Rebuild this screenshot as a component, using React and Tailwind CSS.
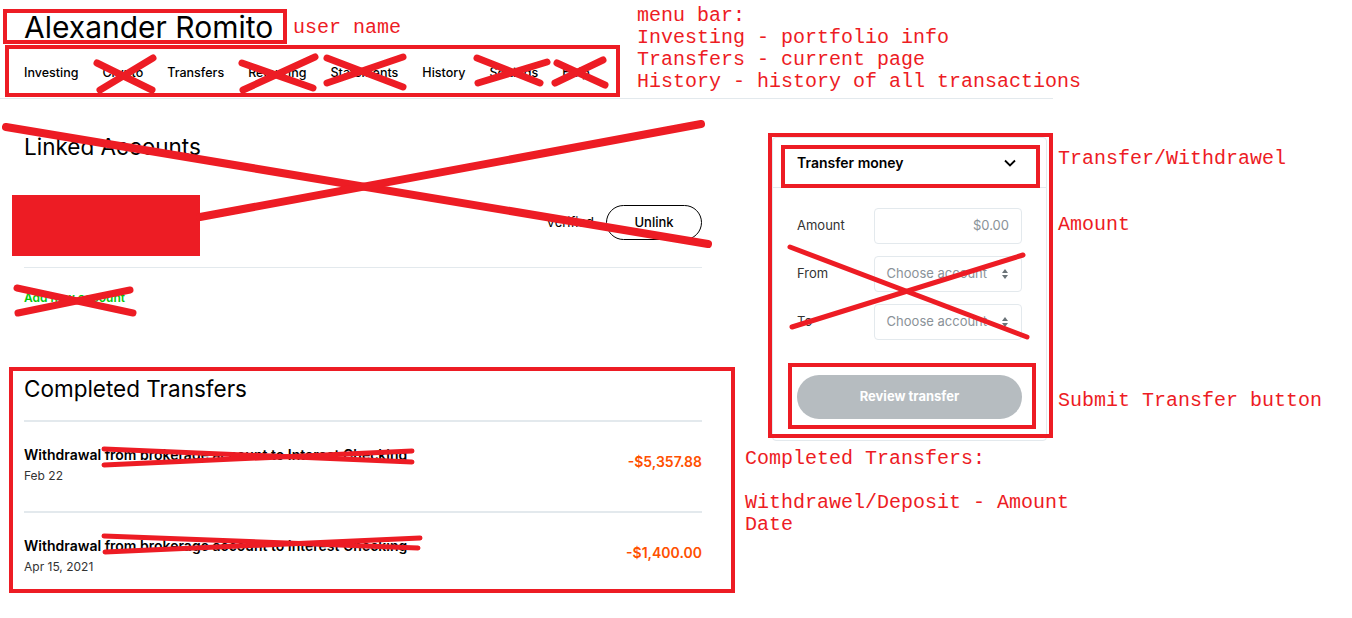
import React from 'react';

const navItems = ['Investing', 'Crypto', 'Transfers', 'Recurring', 'Statements', 'History', 'Settings', 'Help'];

const transfers = [
    { title: 'Withdrawal from brokerage account to Interest Checking', date: 'Feb 22', amount: '-$5,357.88' },
    { title: 'Withdrawal from brokerage account to Interest Checking', date: 'Apr 15, 2021', amount: '-$1,400.00' },
];

// red pen marks drawn over the screenshot
const boxes = [
    [5, 11, 280, 31],
    [7, 47, 611, 48],
    [770, 135, 281, 301],
    [783, 147, 255, 39],
    [790, 365, 244, 62],
    [11, 369, 722, 222],
];

const strokes = [
    [6, 127, 708, 244, 8],
    [200, 217, 701, 124, 8],
    [17, 288, 133, 313, 7],
    [18, 313, 130, 290, 7],
    [97, 63, 152, 90, 7],
    [100, 90, 153, 58, 7],
    [242, 63, 313, 88, 7],
    [243, 90, 315, 57, 7],
    [327, 58, 403, 87, 7],
    [327, 83, 403, 57, 7],
    [477, 58, 540, 83, 7],
    [478, 83, 547, 62, 7],
    [557, 63, 605, 85, 7],
    [555, 83, 603, 60, 7],
    [790, 247, 1027, 337, 5],
    [792, 327, 1023, 255, 5],
    [104, 449, 412, 462, 5],
    [104, 465, 412, 451, 5],
    [104, 536, 418, 548, 5],
    [105, 552, 420, 538, 5],
];

const Stepper = () => (
    <svg width="8" height="12" viewBox="0 0 8 12" className="shrink-0">
        <path d="M4 1 L7 5 L1 5 Z" fill="#6b7378" />
        <path d="M4 11 L7 7 L1 7 Z" fill="#6b7378" />
    </svg>
);

const Field = ({ label, children }) => (
    <div className="flex items-center h-9">
        <span className="w-[77px] text-[13px] text-[#333]">{label}</span>
        {children}
    </div>
);

const App = () => {

    return (

        <div className="relative w-[1352px] h-[618px] bg-white overflow-hidden font-['Inter',sans-serif] text-black">

            <div className="w-[1053px]">

                {/* header */}
                <div className="border-b border-[#e3e9ed]">
                    <h1 className="pt-[9px] pl-6 text-[30px] leading-[36px] font-normal">
                        Alexander Romito
                    </h1>
                    <nav className="flex items-center gap-6 h-[53px] pt-[3px] pl-6">
                        {navItems.map((item) => (
                            <span key={item} className="text-[12.5px] font-medium">
                                {item}
                            </span>
                        ))}
                    </nav>
                </div>

                <div className="flex">

                    {/* left column */}
                    <div className="w-[678px] ml-6">

                        <h2 className="mt-8 text-[22.5px] leading-[32px]">Linked Accounts</h2>

                        <div className="mt-[42px] flex items-center h-[35px]">
                            <span className="text-[13px] font-medium">Interest Checking</span>
                            <span className="ml-auto text-[13px]">Verified</span>
                            <button className="ml-3 w-[96px] h-[35px] rounded-full border border-black text-[13px] font-medium">
                                Unlink
                            </button>
                        </div>

                        <div className="mt-[27px] border-t border-[#e3e9ed]"></div>

                        <div className="mt-[22px] text-[12px] leading-4 font-semibold text-[#00c805]">
                            Add new account
                        </div>

                        <h2 className="mt-[67px] text-[22.5px] leading-[32px]">Completed Transfers</h2>

                        <div className="mt-[15px]">
                            {transfers.map((t, i) => (
                                <div key={i} className="flex items-start border-t-2 border-[#e3e9ed] pt-6 pb-[27px]">
                                    <div>
                                        <div className="text-[14px] leading-[18px] font-semibold">{t.title}</div>
                                        <div className="mt-[4px] text-[12px] leading-4 text-[#333]">{t.date}</div>
                                    </div>
                                    <div className="ml-auto mt-[6px] text-[14px] leading-5 font-semibold text-[#ff5000]">{t.amount}</div>
                                </div>
                            ))}
                        </div>

                    </div>

                    {/* transfer card */}
                    <div className="ml-[70px] mt-[38px] w-[275px] h-[304px] border border-[#e3e9ed] rounded-sm">

                        <div className="flex items-center h-[50px] pl-6 pr-[30px] border-b border-[#e3e9ed]">
                            <span className="text-[14px] font-semibold">Transfer money</span>
                            <svg className="ml-auto" width="12" height="8" viewBox="0 0 12 8">
                                <path d="M1 1.5 L6 6.5 L11 1.5" fill="none" stroke="#000" strokeWidth="1.8" />
                            </svg>
                        </div>

                        <div className="px-6 pt-5 flex flex-col gap-3">
                            <Field label="Amount">
                                <div className="w-[149px] h-full border border-[#e3e9ed] rounded flex items-center justify-end pr-3 text-[13px] text-[#8a9298]">
                                    $0.00
                                </div>
                            </Field>
                            <Field label="From">
                                <div className="w-[149px] h-full border border-[#e3e9ed] rounded flex items-center pl-3 pr-3 text-[13px] text-[#8a9298]">
                                    <span className="flex-1">Choose account</span>
                                    <Stepper />
                                </div>
                            </Field>
                            <Field label="To">
                                <div className="w-[149px] h-full border border-[#e3e9ed] rounded flex items-center pl-3 pr-3 text-[13px] text-[#8a9298]">
                                    <span className="flex-1">Choose account</span>
                                    <Stepper />
                                </div>
                            </Field>
                        </div>

                        <div className="px-6 mt-[35px]">
                            <button className="w-full h-[44px] rounded-full bg-[#b6bcc0] text-white text-[13px] font-bold">
                                Review transfer
                            </button>
                        </div>

                    </div>

                </div>

            </div>

            {/* annotation layer */}
            <svg className="absolute inset-0 pointer-events-none" width="1352" height="618">
                <rect x="12" y="195" width="188" height="61" fill="#ed1c24" />
                {boxes.map(([x, y, w, h], i) => (
                    <rect key={i} x={x} y={y} width={w} height={h} fill="none" stroke="#ed1c24" strokeWidth="4" />
                ))}
                {strokes.map(([x1, y1, x2, y2, sw], i) => (
                    <line key={i} x1={x1} y1={y1} x2={x2} y2={y2} stroke="#ed1c24" strokeWidth={sw} strokeLinecap="round" />
                ))}
            </svg>

            <div className="absolute left-[293px] top-[17px] font-['Liberation_Mono',monospace] text-[20px] leading-[22px] text-[#ed1c24] whitespace-pre">
                user name
            </div>

            <div className="absolute left-[637px] top-[5px] font-['Liberation_Mono',monospace] text-[20px] leading-[22px] text-[#ed1c24] whitespace-pre">
                <div>menu bar:</div>
                <div>Investing - portfolio info</div>
                <div>Transfers - current page</div>
                <div>History - history of all transactions</div>
            </div>

            <div className="absolute left-[1058px] top-[148px] font-['Liberation_Mono',monospace] text-[20px] leading-[22px] text-[#ed1c24] whitespace-pre">
                Transfer/Withdrawel
            </div>

            <div className="absolute left-[1058px] top-[214px] font-['Liberation_Mono',monospace] text-[20px] leading-[22px] text-[#ed1c24] whitespace-pre">
                Amount
            </div>

            <div className="absolute left-[1058px] top-[390px] font-['Liberation_Mono',monospace] text-[20px] leading-[22px] text-[#ed1c24] whitespace-pre">
                Submit Transfer button
            </div>

            <div className="absolute left-[745px] top-[448px] font-['Liberation_Mono',monospace] text-[20px] leading-[22px] text-[#ed1c24] whitespace-pre">
                <div>Completed Transfers:</div>
                <div>&nbsp;</div>
                <div>Withdrawel/Deposit - Amount</div>
                <div>Date</div>
            </div>

        </div>

    );

};

export default App;
